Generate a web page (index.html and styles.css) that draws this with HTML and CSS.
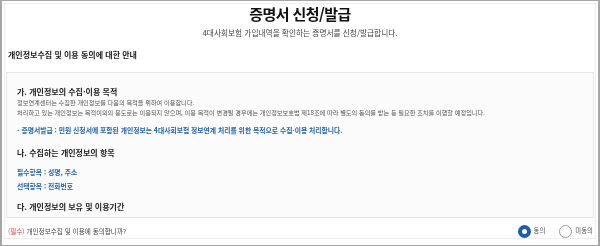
FILE: index.html
```html
<!DOCTYPE html>
<html lang="ko">
<head>
<meta charset="utf-8">
<title>증명서 신청/발급</title>
<link rel="stylesheet" href="styles.css">
</head>
<body>
<div class="frame">
  <header class="head">
    <h1 class="title">증명서 신청/발급</h1>
    <p class="sub">4대사회보험 가입내역을 확인하는 증명서를 신청/발급합니다.</p>
  </header>
  <h2 class="sec">개인정보수집 및 이용 동의에 대한 안내</h2>
  <div class="box">
    <h3 class="ih">가. 개인정보의 수집·이용 목적</h3>
    <p class="txt">정보연계센터는 수집한 개인정보를 다음의 목적을 위하여 이용합니다.<br>처리하고 있는 개인정보는 목적이외의 용도로는 이용되지 않으며, 이용 목적이 변경될 경우에는 개인정보보호법 제18조에 따라 별도의 동의를 받는 등 필요한 조치를 이행할 예정입니다.</p>
    <p class="blue b1">- 증명서발급 : 민원 신청서에 포함된 개인정보는 4대사회보험 정보연계 처리를 위한 목적으로 수집·이용 처리합니다.</p>
    <h3 class="ih h2">나. 수집하는 개인정보의 항목</h3>
    <p class="blue b2">필수항목 : 성명, 주소</p>
    <p class="blue b3">선택항목 : 전화번호</p>
    <h3 class="ih h3">다. 개인정보의 보유 및 이용기간</h3>
    <p class="txt t2">수집된 개인정보는 증명서 발급 처리 후 관련 법령에 따라 일정 기간 보관하며, 보유기간이 경과한 개인정보는 지체 없이 파기합니다.</p>
    <p class="blue b2">- 보유기간 : 5년</p>
    <h3 class="ih h2">라. 동의를 거부할 권리 및 동의 거부 시 불이익</h3>
    <p class="txt t2">귀하는 개인정보 수집·이용에 대한 동의를 거부할 권리가 있습니다.<br>다만, 필수항목에 대한 동의를 거부하실 경우 증명서 신청/발급 서비스 이용이 제한될 수 있습니다.</p>
    <p class="txt t2">선택항목에 대한 동의를 거부하시더라도 서비스 이용에는 제한이 없습니다.</p>
  </div>
  <div class="agree">
    <p class="q"><span class="req">(필수)</span> 개인정보수집 및 이용에 동의합니까?</p>
    <div class="radios">
      <label class="opt"><input type="radio" name="agree" class="rd" checked>동의</label>
      <label class="opt"><input type="radio" name="agree" class="rd">미동의</label>
    </div>
  </div>
</div>
</body>
</html>
```

FILE: styles.css
```css
html, body {
  margin: 0;
  padding: 0;
}
body {
  width: 600px;
  height: 246px;
  box-sizing: border-box;
  border: 1px solid #a6a6a6;
  border-left-width: 2px;
  border-right-width: 2px;
  background: #fff;
  font-family: "Noto Sans CJK KR", "Noto Sans", sans-serif;
  color: #333;
  overflow: hidden;
}
.frame {
  margin: 2px;
  border: 1px solid #eeeeee;
  height: 236px;
  box-sizing: border-box;
  padding: 0 1px;
}
.head {
  text-align: center;
  padding-top: 1px;
}
.title {
  margin: 0;
  font-size: 15px;
  line-height: 18px;
  font-weight: 700;
  color: #111;
  letter-spacing: -0.6px;
}
.sub {
  margin: 5px 0 0;
  font-size: 7.7px;
  line-height: 10px;
  color: #444;
}
.sec {
  margin: 12px 0 0;
  padding-left: 2px;
  font-size: 8px;
  line-height: 10px;
  font-weight: 700;
  color: #222;
}
.box {
  margin: 12px 0 0 0;
  height: 146px;
  box-sizing: border-box;
  border: 1px solid #e6e6e6;
  background: #fbfbfb;
  padding: 14px 10px 0 10px;
  overflow-y: scroll;
}
.box::-webkit-scrollbar {
  width: 6px;
}
.box::-webkit-scrollbar-track {
  background: transparent;
}
.box::-webkit-scrollbar-thumb {
  background: #a9a9a9;
  border-right: 1px solid #fbfbfb;
}
.ih {
  margin: 0;
  font-size: 8px;
  line-height: 10px;
  font-weight: 700;
  color: #222;
}
.txt {
  margin: 1px 0 0;
  font-size: 6.2px;
  line-height: 9.5px;
  color: #555;
}
.blue {
  margin: 0;
  font-size: 6.8px;
  line-height: 10px;
  font-weight: 700;
  color: #2565ae;
}
.b1 { margin-top: 8px; }
.h2 { margin-top: 13px; }
.b2 { margin-top: 9px; }
.b3 { margin-top: 4px; }
.h3 { margin-top: 11px; }
.t2 { margin-top: 5px; }
.agree {
  margin-top: 6px;
  height: 14px;
  display: flex;
  align-items: center;
  justify-content: space-between;
  padding-left: 2px;
}
.q {
  margin: 0;
  font-size: 6.6px;
  line-height: 14px;
  color: #444;
}
.req {
  color: #d8404a;
}
.radios {
  display: flex;
  align-items: center;
  gap: 14px;
  padding-right: 1px;
}
.opt {
  display: flex;
  align-items: center;
  gap: 3px;
  font-size: 6.4px;
  line-height: 14px;
  color: #555;
}
.rd {
  -webkit-appearance: none;
  appearance: none;
  margin: 0;
  width: 13px;
  height: 13px;
  box-sizing: border-box;
  border-radius: 50%;
  border: 1px solid #9a9a9a;
  background: #fff;
}
.rd:checked {
  border: 4px solid #1c5ea8;
}
```
